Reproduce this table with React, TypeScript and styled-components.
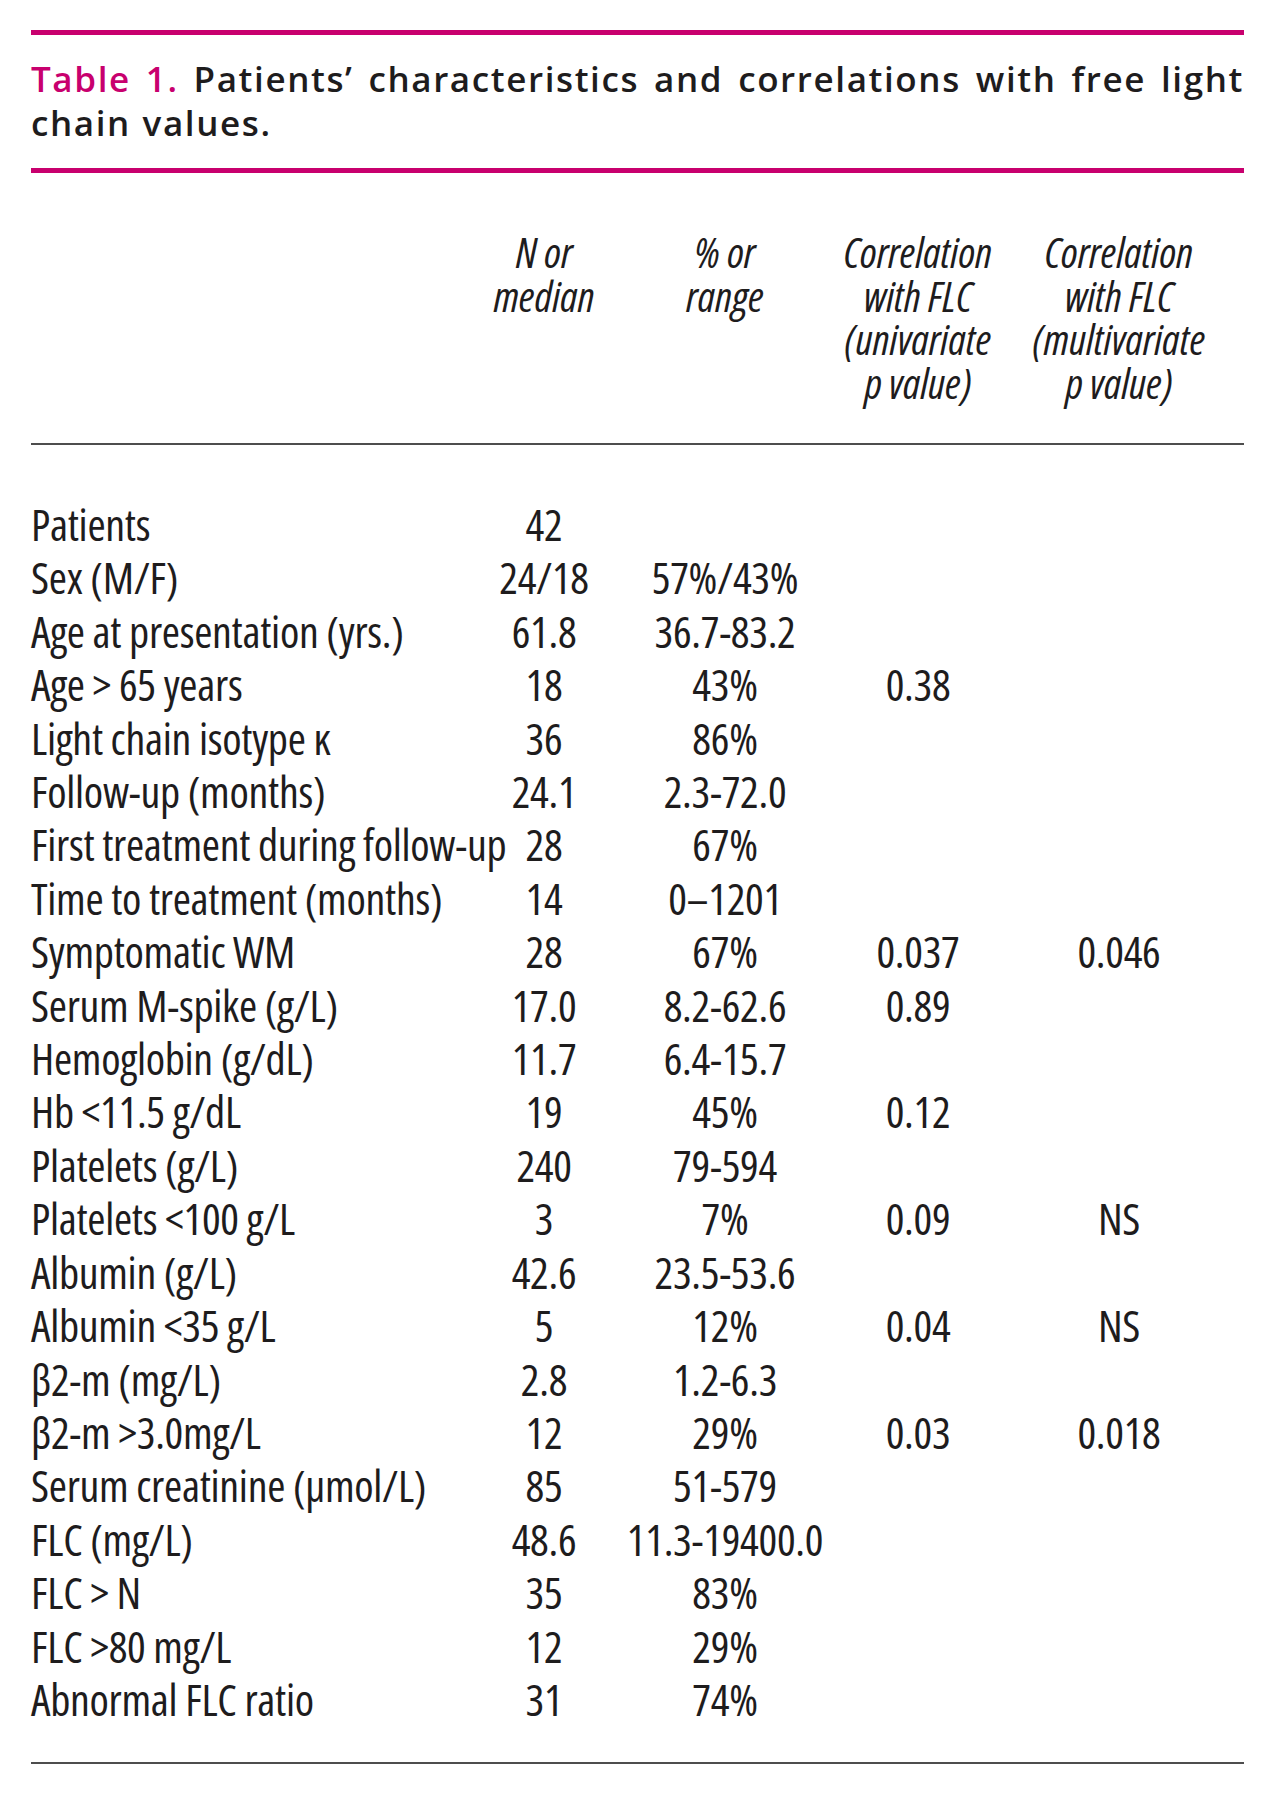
import React from "react";
import styled, { createGlobalStyle } from "styled-components";

const GlobalStyle = createGlobalStyle`
  body {
    margin: 0;
    background: #ffffff;
    color: #1e1c1d;
    font-family: "Open Sans", "Liberation Sans", sans-serif;
  }
`;

const PINK = "#c8006e";

/* the five columns of the table: label, N, %, univariate, multivariate */
const COLUMNS = "431px 164px 198px 188px 214px 1fr";

const Page = styled.div`
  width: 1213px;
  padding: 30px 0 20px 31px;
`;

const PinkRule = styled.div`
  height: 5px;
  background: ${PINK};
`;

const GrayRule = styled.div`
  height: 2px;
  background: #4d4d4d;
`;

const Caption = styled.div`
  padding: 22px 0 23px;
  font-size: 35px;
  line-height: 44px;
  font-weight: 600;
  letter-spacing: 1.6px;
  word-spacing: 1px;
`;

const CaptionLine = styled.div<{ $justify?: boolean }>`
  text-align: ${(p) => (p.$justify ? "justify" : "left")};
  text-align-last: ${(p) => (p.$justify ? "justify" : "left")};
  white-space: nowrap;
`;

const Label = styled.span`
  color: ${PINK};
`;

const Head = styled.div`
  display: grid;
  grid-template-columns: ${COLUMNS};
  padding: 57px 0 39px;
  font-style: italic;
  font-stretch: 75%;
  font-size: 42px;
  line-height: 43.5px;
`;

const HeadCell = styled.div`
  text-align: center;
  white-space: pre;
`;

const Body = styled.div`
  padding: 53px 0 36px;
`;

const Row = styled.div`
  display: grid;
  grid-template-columns: ${COLUMNS};
  height: 53.42px;
  font-stretch: 75%;
  font-size: 44px;
  line-height: 53.42px;
  letter-spacing: -0.3px;
`;

const Cell = styled.div<{ $first?: boolean }>`
  text-align: ${(p) => (p.$first ? "left" : "center")};
  white-space: nowrap;
`;

const rows: string[][] = [
  ["Patients", "42", "", "", ""],
  ["Sex (M/F)", "24/18", "57%/43%", "", ""],
  ["Age at presentation (yrs.)", "61.8", "36.7-83.2", "", ""],
  ["Age > 65 years", "18", "43%", "0.38", ""],
  ["Light chain isotype κ", "36", "86%", "", ""],
  ["Follow-up (months)", "24.1", "2.3-72.0", "", ""],
  ["First treatment during follow-up", "28", "67%", "", ""],
  ["Time to treatment (months)", "14", "0–1201", "", ""],
  ["Symptomatic WM", "28", "67%", "0.037", "0.046"],
  ["Serum M-spike (g/L)", "17.0", "8.2-62.6", "0.89", ""],
  ["Hemoglobin (g/dL)", "11.7", "6.4-15.7", "", ""],
  ["Hb <11.5 g/dL", "19", "45%", "0.12", ""],
  ["Platelets (g/L)", "240", "79-594", "", ""],
  ["Platelets <100 g/L", "3", "7%", "0.09", "NS"],
  ["Albumin (g/L)", "42.6", "23.5-53.6", "", ""],
  ["Albumin <35 g/L", "5", "12%", "0.04", "NS"],
  ["β2-m (mg/L)", "2.8", "1.2-6.3", "", ""],
  ["β2-m >3.0mg/L", "12", "29%", "0.03", "0.018"],
  ["Serum creatinine (μmol/L)", "85", "51-579", "", ""],
  ["FLC (mg/L)", "48.6", "11.3-19400.0", "", ""],
  ["FLC > N", "35", "83%", "", ""],
  ["FLC >80 mg/L", "12", "29%", "", ""],
  ["Abnormal FLC ratio", "31", "74%", "", ""],
];

const heads = [
  "",
  "N or\nmedian",
  "% or\nrange",
  "Correlation\nwith FLC\n(univariate\np value)",
  "Correlation\nwith FLC\n(multivariate\np value)",
];

export default function App() {
  return (
    <Page>
      <GlobalStyle />
      <PinkRule />
      <Caption>
        <CaptionLine $justify>
          <Label>Table 1.</Label> Patients’ characteristics and correlations
          with free light
        </CaptionLine>
        <CaptionLine>chain values.</CaptionLine>
      </Caption>
      <PinkRule />
      <Head>
        {heads.map((h, i) => (
          <HeadCell key={i}>{h}</HeadCell>
        ))}
      </Head>
      <GrayRule />
      <Body>
        {rows.map((r, i) => (
          <Row key={i}>
            {r.map((c, j) => (
              <Cell key={j} $first={j === 0}>
                {c}
              </Cell>
            ))}
          </Row>
        ))}
      </Body>
      <GrayRule />
    </Page>
  );
}
